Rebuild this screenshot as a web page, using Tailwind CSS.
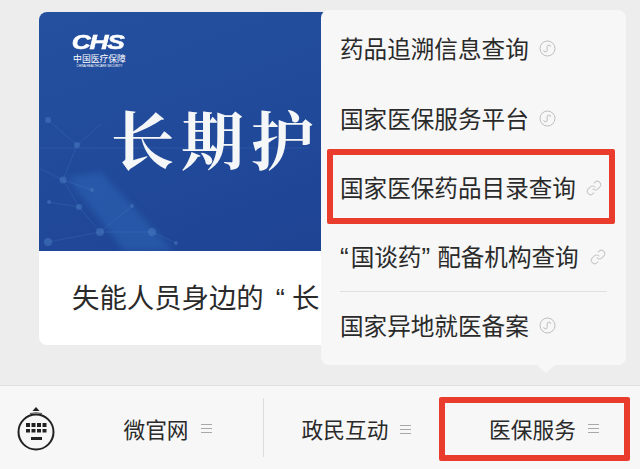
<!doctype html>
<html>
<head>
  <meta charset="UTF-8">
  <script src="https://cdn.jsdelivr.net/npm/@tailwindcss/browser@4"></script>
  <title>医保服务</title>
</head>
<body class="relative w-[640px] h-[469px] overflow-hidden bg-[#ededed] font-['Noto_Sans_CJK_SC','Noto_Sans',sans-serif] text-[#2a2a2a]">

  <div class="flex flex-col h-full">
    <!-- Article card -->
    <main class="flex-1 pt-3 pl-[39px]">
      <div class="w-[560px] h-[333px] bg-white rounded-lg overflow-hidden">
        <div class="relative h-[239px] overflow-hidden bg-[linear-gradient(160deg,#24509f_0%,#21499a_45%,#1c3f8e_100%)]">
          <svg class="absolute left-0 top-0" width="300" height="239" viewBox="0 0 300 239" fill="none">
            <path class="blur-[3px]" d="M28 165 L85 239 L135 239 L62 160 Z" fill="#2f68b8" opacity="0.5"/>
            <g stroke="#4f83c6" stroke-width="0.7" opacity="0.35">
              <path d="M0 136H270"/>
              <path d="M9 108L38 133L62 112M38 133L24 168L0 156M24 168L53 178M24 168L40 195L61 220M10 190L40 195M61 220L93 194M9 230L61 220L113 220L137 231"/>
            </g>
            <g fill="#4f83c6" opacity="0.45">
              <circle cx="9" cy="108" r="3"/><circle cx="38" cy="133" r="3"/><circle cx="24" cy="168" r="3.5"/>
              <circle cx="53" cy="178" r="2"/><circle cx="10" cy="190" r="2"/><circle cx="40" cy="195" r="3"/>
              <circle cx="93" cy="194" r="2"/><circle cx="61" cy="220" r="4"/><circle cx="113" cy="220" r="4"/><circle cx="9" cy="230" r="4"/><circle cx="137" cy="231" r="2"/>
            </g>
          </svg>

          <!-- CHS logo -->
          <div class="absolute left-[34px] top-[21px] w-[53px] flex flex-col items-center text-white">
            <span class="block h-[17px] -ml-[4px] text-[21px] leading-[17px] font-black italic tracking-[-1px] scale-x-[1.25] [-webkit-text-stroke:0.6px_white] font-['Liberation_Sans',sans-serif]">CHS</span>
            <span class="block mt-[4px] text-[8.8px] leading-[10px] whitespace-nowrap">中国医疗保障</span>
            <span class="block text-[3px] leading-[4px] whitespace-nowrap font-['Liberation_Sans',sans-serif]">CHINA HEALTHCARE SECURITY</span>
          </div>

          <div class="absolute left-[72px] top-[89px] flex gap-[7px] text-[63px] leading-[72px] font-bold text-[#f4f6f8] font-['Noto_Serif_CJK_SC','Noto_Sans_CJK_SC',serif]">
            <span>长</span><span>期</span><span>护</span>
          </div>
        </div>
        <p class="pl-[33px] pt-[25px] text-[27.4px] leading-[40px] whitespace-nowrap">失能人员身边的<span class="font-['Liberation_Sans'] ml-[12px] mr-[7px]">“</span>长</p>
      </div>
    </main>

    <!-- Bottom menu bar -->
    <footer class="h-[84px] shrink-0 flex items-center bg-[#f7f7f7] border-t border-[#dfdfdf]">
      <div class="w-[72px] shrink-0 flex justify-center pt-[3px]">
        <svg width="40" height="46" viewBox="0 0 40 46" fill="none">
          <path d="M20 1L23.5 5H16.5Z" fill="#222"/>
          <path d="M14 7.5Q20 6 26 7.5" stroke="#555" stroke-width="1"/>
          <circle cx="20" cy="26" r="17.5" stroke="#222" stroke-width="2"/>
          <g fill="#222">
            <rect x="10" y="17" width="4" height="4"/><rect x="15.5" y="17" width="4" height="4"/><rect x="21" y="17" width="4" height="4"/><rect x="26.5" y="17" width="4" height="4"/>
            <rect x="10" y="23" width="4" height="3.5"/><rect x="15.5" y="23" width="4" height="3.5"/><rect x="21" y="23" width="4" height="3.5"/><rect x="26.5" y="23" width="4" height="3.5"/>
            <rect x="15" y="31" width="11" height="3"/>
          </g>
        </svg>
      </div>
      <div class="w-[191px] shrink-0 flex items-center justify-center gap-3 text-[21.7px] pt-[3px]">
        <span>微官网</span>
        <svg width="11" height="11" viewBox="0 0 11 11" stroke="#a8a8a8" stroke-width="1.2"><path d="M0 1.5H11M0 5.5H11M0 9.5H11"/></svg>
      </div>
      <div class="w-[188px] shrink-0 self-stretch my-3 flex items-center justify-center gap-3 text-[21.7px] pt-[3px] pr-[2px] border-l border-[#dcdcdc]">
        <span>政民互动</span>
        <svg width="11" height="11" viewBox="0 0 11 11" stroke="#a8a8a8" stroke-width="1.2"><path d="M0 1.5H11M0 5.5H11M0 9.5H11"/></svg>
      </div>
      <div class="w-[189px] shrink-0 flex items-center justify-center gap-3 text-[21.7px] pt-[3px] pr-[3px]">
        <span>医保服务</span>
        <svg width="11" height="11" viewBox="0 0 11 11" stroke="#a8a8a8" stroke-width="1.2"><path d="M0 1.5H11M0 5.5H11M0 9.5H11"/></svg>
      </div>
    </footer>
  </div>

  <!-- Popup menu -->
  <div class="absolute left-[321px] top-[10px] w-[305px] h-[355px] px-[19px] pt-[4px] bg-[#f7f7f7] rounded-lg text-[23.6px]">
    <div class="h-[69.5px] flex items-center gap-[10px]">
      <span>药品追溯信息查询</span>
      <svg width="17" height="17" viewBox="0 0 17 17" fill="none" stroke="#bdbdbd" stroke-width="1"><circle cx="8.5" cy="8.5" r="7.5"/><path d="M4.8 10.2a1.7 1.7 0 1 0 3.4 0V6.8a1.7 1.7 0 1 1 3.4 0"/></svg>
    </div>
    <div class="h-[69.5px] flex items-center gap-[10px]">
      <span>国家医保服务平台</span>
      <svg width="17" height="17" viewBox="0 0 17 17" fill="none" stroke="#bdbdbd" stroke-width="1"><circle cx="8.5" cy="8.5" r="7.5"/><path d="M4.8 10.2a1.7 1.7 0 1 0 3.4 0V6.8a1.7 1.7 0 1 1 3.4 0"/></svg>
    </div>
    <div class="h-[69.5px] flex items-center gap-[10px]">
      <span>国家医保药品目录查询</span>
      <svg width="16" height="16" viewBox="0 0 24 24" fill="none" stroke="#c8c8c8" stroke-width="1.6"><path d="M10 13a5 5 0 0 0 7.54.54l3-3a5 5 0 0 0-7.07-7.07l-1.72 1.71"/><path d="M14 11a5 5 0 0 0-7.54-.54l-3 3a5 5 0 0 0 7.07 7.07l1.71-1.71"/></svg>
    </div>
    <div class="h-[69px] flex items-center gap-[11px] border-b border-[#e0e0e0] -mb-px pt-[1px]">
      <span class="whitespace-nowrap"><span class="font-['Liberation_Sans'] text-[26px] leading-none mr-[2px]">“</span>国谈药<span class="font-['Liberation_Sans'] text-[26px] leading-none mr-[7px]">”</span>配备机构查询</span>
      <svg width="16" height="16" viewBox="0 0 24 24" fill="none" stroke="#c8c8c8" stroke-width="1.6"><path d="M10 13a5 5 0 0 0 7.54.54l3-3a5 5 0 0 0-7.07-7.07l-1.72 1.71"/><path d="M14 11a5 5 0 0 0-7.54-.54l-3 3a5 5 0 0 0 7.07 7.07l1.71-1.71"/></svg>
    </div>
    <div class="h-[69.5px] flex items-center gap-[10px]">
      <span>国家异地就医备案</span>
      <svg width="17" height="17" viewBox="0 0 17 17" fill="none" stroke="#bdbdbd" stroke-width="1"><circle cx="8.5" cy="8.5" r="7.5"/><path d="M4.8 10.2a1.7 1.7 0 1 0 3.4 0V6.8a1.7 1.7 0 1 1 3.4 0"/></svg>
    </div>
    <!-- Arrow -->
    <div class="absolute left-[216px] -bottom-[8px] w-0 h-0 border-x-[9px] border-x-transparent border-t-[8px] border-t-[#f7f7f7]"></div>
  </div>

  <!-- Red annotation boxes -->
  <div class="absolute left-[327px] top-[149px] w-[288px] h-[75px] border-[6px] border-[#ea3c2d] rounded-[2px]"></div>
  <div class="absolute left-[439px] top-[397px] w-[191px] h-[64px] border-[6px] border-[#ea3c2d] rounded-[2px]"></div>
</body>
</html>
